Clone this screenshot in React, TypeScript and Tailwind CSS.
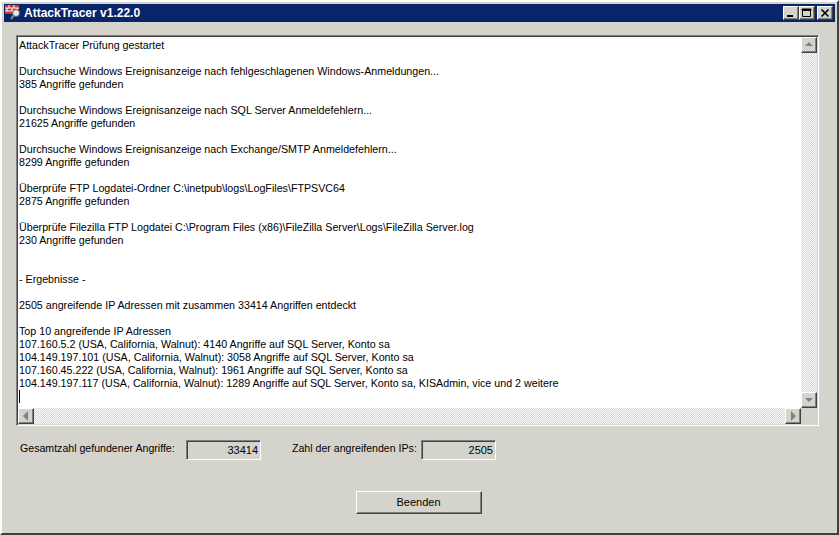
const lines = [
  "AttackTracer Prüfung gestartet",
  "",
  "Durchsuche Windows Ereignisanzeige nach fehlgeschlagenen Windows-Anmeldungen...",
  "385 Angriffe gefunden",
  "",
  "Durchsuche Windows Ereignisanzeige nach SQL Server Anmeldefehlern...",
  "21625 Angriffe gefunden",
  "",
  "Durchsuche Windows Ereignisanzeige nach Exchange/SMTP Anmeldefehlern...",
  "8299 Angriffe gefunden",
  "",
  "Überprüfe FTP Logdatei-Ordner C:\\inetpub\\logs\\LogFiles\\FTPSVC64",
  "2875 Angriffe gefunden",
  "",
  "Überprüfe Filezilla FTP Logdatei C:\\Program Files (x86)\\FileZilla Server\\Logs\\FileZilla Server.log",
  "230 Angriffe gefunden",
  "",
  "",
  "- Ergebnisse -",
  "",
  "2505 angreifende IP Adressen mit zusammen 33414 Angriffen entdeckt",
  "",
  "Top 10 angreifende IP Adressen",
  "107.160.5.2 (USA, California, Walnut): 4140 Angriffe auf SQL Server, Konto sa",
  "104.149.197.101 (USA, California, Walnut): 3058 Angriffe auf SQL Server, Konto sa",
  "107.160.45.222 (USA, California, Walnut): 1961 Angriffe auf SQL Server, Konto sa",
  "104.149.197.117 (USA, California, Walnut): 1289 Angriffe auf SQL Server, Konto sa, KISAdmin, vice und 2 weitere",
];

const raised =
  "border border-t-white border-l-white border-r-[#404040] border-b-[#404040] bg-[#d5d4cc] shadow-[inset_-1px_-1px_0_#808080]";
const dither =
  "bg-[repeating-conic-gradient(#d5d4cc_0_25%,#ffffff_0_50%)] bg-[length:2px_2px]";

function ScrollButton({ dir }: { dir: "up" | "down" | "left" | "right" }) {
  const points = {
    up: "4,9 8,5 12,9",
    down: "4,6 8,10 12,6",
    left: "10,3 5,8 10,13",
    right: "6,3 11,8 6,13",
  }[dir];
  return (
    <div className={`w-4 h-4 shrink-0 ${raised}`}>
      <svg width="14" height="14" viewBox="1 1 14 14">
        <polygon points={points} fill="#808080" />
      </svg>
    </div>
  );
}

function CaptionButton({ kind }: { kind: "min" | "max" | "close" }) {
  return (
    <div className={`w-4 h-[14px] ${raised}`}>
      <svg width="14" height="12" viewBox="0 0 14 12">
        {kind === "min" && <rect x="3" y="8" width="6" height="2" fill="#000" />}
        {kind === "max" && (
          <path d="M2.5 2.5h8v7h-8zM2 2h9v1.5H2z" fill="none" stroke="#000" />
        )}
        {kind === "close" && (
          <path d="M3.5 2.5l7 7M10.5 2.5l-7 7" stroke="#000" strokeWidth="1.6" />
        )}
      </svg>
    </div>
  );
}

function Readout({ value, width }: { value: string; width: string }) {
  return (
    <div
      className={`${width} h-[20px] flex items-center justify-end pr-[2px] border border-t-[#808080] border-l-[#808080] border-r-white border-b-white shadow-[inset_1px_1px_0_#404040] text-[11px] text-black`}
    >
      {value}
    </div>
  );
}

export default function App() {
  return (
    <div className="w-[839px] h-[535px] overflow-hidden bg-[#d5d4cc] font-['Liberation_Sans',sans-serif] text-[10.7px] text-black flex flex-col border-r-2 border-b-2 border-r-[#404040] border-b-[#404040] border-l-2 border-t-2 border-l-white border-t-white pl-[2px] pt-[2px] pr-[2px] pb-[1px]">
      {/* title bar */}
      <div className="h-[18px] shrink-0 bg-[#0a246a] flex items-center pl-[1px] pr-[2px]">
        <svg width="18" height="18" viewBox="0 0 18 18" className="shrink-0 -mt-[2px]">
          <rect x="0" y="2" width="14" height="9" fill="#d8322a" />
          <path d="M0 5h14M0 8h14M4 2v3M9 2v3M2 5v3M7 5v3M12 5v3" stroke="#fff" />
          <circle cx="11" cy="10" r="3.5" fill="#e8e8e8" stroke="#606060" />
          <path d="M8.5 12.5L6 16" stroke="#909090" strokeWidth="2" />
        </svg>
        <span className="ml-[1px] font-bold text-[12px] text-white">AttackTracer v1.22.0</span>
        <div className="ml-auto flex">
          <CaptionButton kind="min" />
          <CaptionButton kind="max" />
          <div className="w-[2px]" />
          <CaptionButton kind="close" />
        </div>
      </div>

      {/* log box */}
      <div className="ml-[12px] mt-[13px] w-[803px] h-[391px] shrink-0 flex flex-col border border-t-[#808080] border-l-[#808080] border-r-white border-b-white shadow-[inset_1px_1px_0_#404040] pt-[1px] pl-[1px]">
        <div className="flex-1 min-h-0 flex">
          <div className="flex-1 bg-white pl-[1px] pt-[2px] leading-[13px] overflow-hidden">
            {lines.map((line, i) => (
              <div key={i} className="h-[13px] whitespace-pre">
                {line}
              </div>
            ))}
            <div className="w-px h-[13px] bg-black" />
          </div>
          <div className={`w-4 mr-[1px] flex flex-col justify-between ${dither}`}>
            <ScrollButton dir="up" />
            <ScrollButton dir="down" />
          </div>
        </div>
        <div className="h-4 mb-[1px] flex shrink-0">
          <div className={`flex-1 flex justify-between ${dither}`}>
            <ScrollButton dir="left" />
            <ScrollButton dir="right" />
          </div>
          <div className="w-4 mr-[1px]" />
        </div>
      </div>

      {/* counters */}
      <div className="mt-[14px] ml-[16px] h-[20px] flex items-center shrink-0 text-[10.6px] whitespace-nowrap">
        <span className="w-[166px] pb-[2px]">Gesamtzahl gefundener Angriffe:</span>
        <Readout value="33414" width="w-[75px]" />
        <span className="ml-[31px] w-[129px] pb-[2px]">Zahl der angreifenden IPs:</span>
        <Readout value="2505" width="w-[75px]" />
      </div>

      {/* exit button */}
      <div className="mt-[31px] flex justify-center pr-[2px]">
        <button className={`w-[126px] h-[23px] text-[11px] ${raised}`}>Beenden</button>
      </div>
    </div>
  );
}
